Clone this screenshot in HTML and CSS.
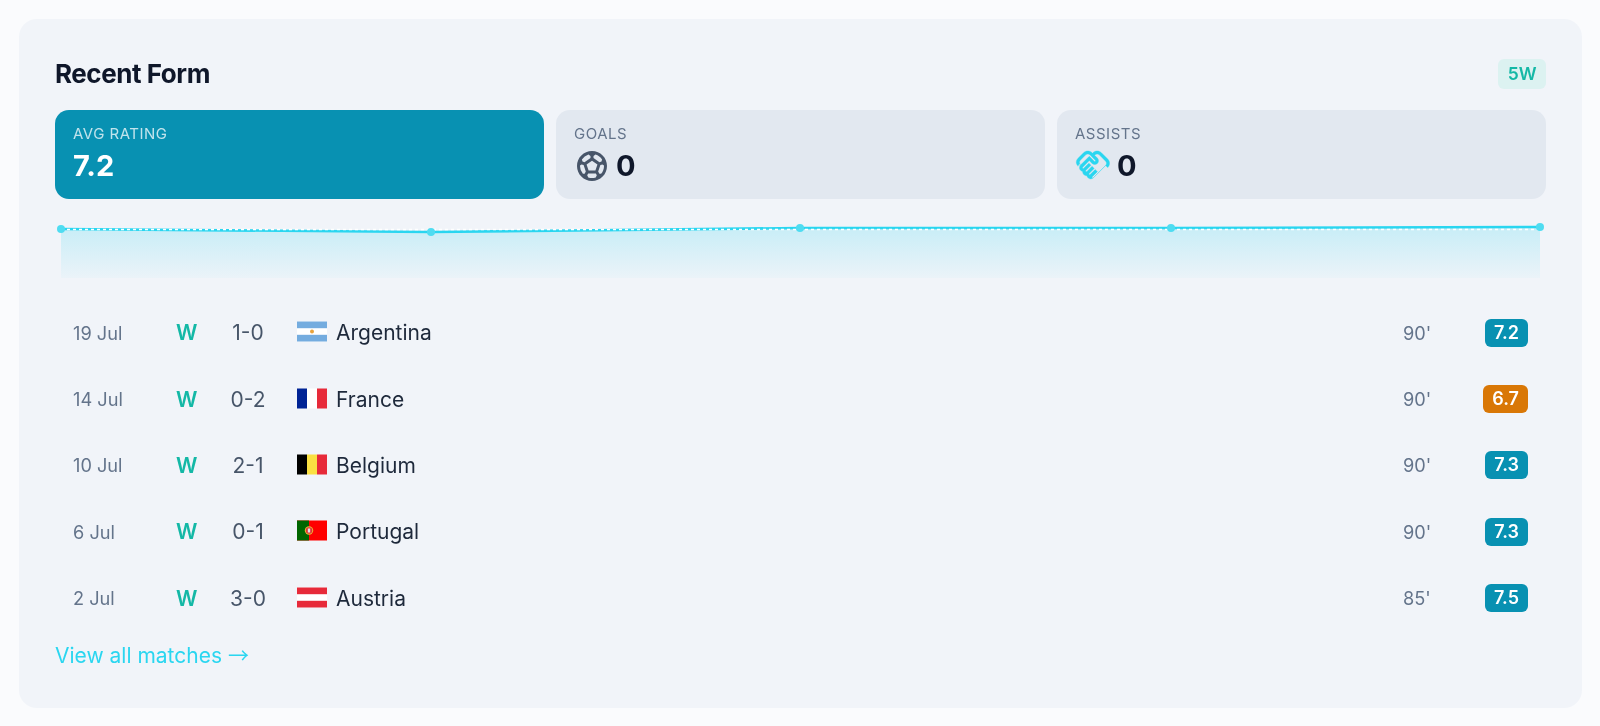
FILE: index.html
```html
<!DOCTYPE html>
<html lang="en">
<head>
<meta charset="utf-8">
<title>Recent Form</title>
<link rel="stylesheet" href="styles.css">
</head>
<body>
<section class="card">
  <header class="head">
    <h2 class="title">Recent Form</h2>
    <span class="streak">5W</span>
  </header>
  <div class="stats">
    <div class="stat stat-primary">
      <div class="stat-label">AVG RATING</div>
      <div class="stat-value">7.2</div>
    </div>
    <div class="stat">
      <div class="stat-label">GOALS</div>
      <div class="stat-value">
        <svg class="ico ico-ball" viewBox="0 0 24 24" fill="currentColor"><path d="M12 2C6.48 2 2 6.48 2 12s4.48 10 10 10 10-4.48 10-10S17.52 2 12 2zm1 3.3 1.35-.95c1.82.56 3.37 1.76 4.38 3.34l-.39 1.34-1.35.46L13 6.7V5.3zm-3.35-.95L11 5.3v1.4L7.01 9.49l-1.35-.46-.39-1.34a8.103 8.103 0 0 1 4.38-3.34zM7.08 17.11l-1.14.1A7.938 7.938 0 0 1 4 12c0-.12.01-.23.02-.35l1-.73 1.38.48 1.46 4.34-.78 1.37zm7.42 2.48c-.79.26-1.63.41-2.5.41s-1.71-.15-2.5-.41l-.69-1.49.64-1.1h5.11l.64 1.11-.7 1.48zM14.27 15H9.73l-1.35-4.02L12 8.44l3.63 2.54L14.27 15zm3.79 2.21-1.14-.1-.79-1.37 1.46-4.34 1.39-.47 1 .73c.01.11.02.22.02.34 0 1.99-.73 3.81-1.94 5.21z"/></svg>
        <span>0</span>
      </div>
    </div>
    <div class="stat">
      <div class="stat-label">ASSISTS</div>
      <div class="stat-value">
        <svg class="ico ico-hands" viewBox="0 0 24 24" fill="currentColor" stroke="currentColor" stroke-width="0.25"><path d="M12.22 19.85c-.18.18-.5.21-.71 0a.504.504 0 0 1 0-.71l3.39-3.39-1.41-1.41-3.39 3.39c-.19.2-.51.19-.71 0a.513.513 0 0 1 0-.71l3.39-3.39-1.41-1.41-3.39 3.39c-.18.18-.5.21-.71 0a.513.513 0 0 1 0-.71l3.39-3.39-1.42-1.41-3.39 3.39c-.18.18-.5.21-.71 0a.513.513 0 0 1 0-.71L9.52 8.4l1.87 1.86c.95.95 2.59.94 3.54 0 .98-.98.98-2.56 0-3.54l-1.86-1.86.28-.28c.78-.78 2.05-.78 2.83 0l4.24 4.24c.78.78.78 2.05 0 2.83l-8.2 8.2zm9.61-6.78c1.56-1.56 1.56-4.09 0-5.66l-4.24-4.24c-1.56-1.56-4.09-1.56-5.66 0l-.28.28-.28-.28c-1.56-1.56-4.09-1.56-5.66 0L2.17 6.71a3.995 3.995 0 0 0-.4 5.19l1.45-1.45a2 2 0 0 1 .37-2.33l3.54-3.54c.78-.78 2.05-.78 2.83 0l3.56 3.56c.18.18.21.5 0 .71-.21.21-.53.18-.71 0L9.52 5.57l-5.8 5.79c-.98.97-.98 2.56 0 3.54.39.39.89.64 1.42.71a2.458 2.458 0 0 0 .71 2.12 2.458 2.458 0 0 0 2.12.71c.07.54.31 1.03.71 1.42.47.47 1.1.73 1.77.73.67 0 1.3-.26 1.77-.73l8.21-8.21z"/><path d="M1.9 12l2.4-1.2" fill="none"/></svg>
        <span>0</span>
      </div>
    </div>
  </div>
  <svg class="spark" viewBox="0 0 1491 62" preserveAspectRatio="none">
    <defs>
      <linearGradient id="fade" x1="0" y1="0" x2="0" y2="1">
        <stop offset="0" stop-color="#22d3ee" stop-opacity="0.2"/>
        <stop offset="1" stop-color="#22d3ee" stop-opacity="0.03"/>
      </linearGradient>
    </defs>
    <path class="spark-fill" d="M6 8L376 11L745 7L1116 7L1485 6V57H6Z"/>
    <path class="spark-line" d="M6 8L376 11L745 7L1116 7L1485 6"/>
    <path class="spark-avg" d="M6 8.5H1485"/>
    <circle class="spark-dot" cx="6" cy="8" r="4"/>
    <circle class="spark-dot" cx="376" cy="11" r="4"/>
    <circle class="spark-dot" cx="745" cy="7" r="4"/>
    <circle class="spark-dot" cx="1116" cy="7" r="4"/>
    <circle class="spark-dot" cx="1485" cy="6" r="4"/>
  </svg>
  <ul class="matches">
    <li class="match"><span class="date">19 Jul</span><span class="res">W</span><span class="score">1-0</span>
      <svg class="flag" viewBox="0 0 30 20"><rect width="30" height="20" fill="#fff"/><rect width="30" height="6.7" fill="#74acdf"/><rect y="13.3" width="30" height="6.7" fill="#74acdf"/><circle cx="15" cy="10" r="2" fill="#e8a33d"/></svg>
      <span class="team">Argentina</span><span class="mins">90'</span><span class="slot"><span class="rating">7.2</span></span></li>
    <li class="match"><span class="date">14 Jul</span><span class="res">W</span><span class="score">0-2</span>
      <svg class="flag" viewBox="0 0 30 20"><rect width="10" height="20" fill="#002395"/><rect x="10" width="10" height="20" fill="#fff"/><rect x="20" width="10" height="20" fill="#e72a3a"/></svg>
      <span class="team">France</span><span class="mins">90'</span><span class="slot"><span class="rating rating-low">6.7</span></span></li>
    <li class="match"><span class="date">10 Jul</span><span class="res">W</span><span class="score">2-1</span>
      <svg class="flag" viewBox="0 0 30 20"><rect width="10" height="20" fill="#000"/><rect x="10" width="10" height="20" fill="#fae042"/><rect x="20" width="10" height="20" fill="#e72a3a"/></svg>
      <span class="team">Belgium</span><span class="mins">90'</span><span class="slot"><span class="rating">7.3</span></span></li>
    <li class="match"><span class="date">6 Jul</span><span class="res">W</span><span class="score">0-1</span>
      <svg class="flag" viewBox="0 0 30 20"><rect width="30" height="20" fill="#f00"/><rect width="12" height="20" fill="#060"/><circle cx="12" cy="10" r="4.2" fill="#e8b93a"/><circle cx="12" cy="10" r="3.2" fill="#d33"/><rect x="10.8" y="8" width="2.4" height="4" fill="#dfe6ee"/></svg>
      <span class="team">Portugal</span><span class="mins">90'</span><span class="slot"><span class="rating">7.3</span></span></li>
    <li class="match"><span class="date">2 Jul</span><span class="res">W</span><span class="score">3-0</span>
      <svg class="flag" viewBox="0 0 30 20"><rect width="30" height="20" fill="#fff"/><rect width="30" height="6.7" fill="#e72a3a"/><rect y="13.3" width="30" height="6.7" fill="#e72a3a"/></svg>
      <span class="team">Austria</span><span class="mins">85'</span><span class="slot"><span class="rating">7.5</span></span></li>
  </ul>
  <a class="all" href="#">View all matches <span class="arrow">→</span></a>
</section>
</body>
</html>
```
FILE: styles.css
```css
* { box-sizing: border-box; }
html, body { height: 100%; }
body {
  margin: 0;
  padding: 19px 18px 18px 19px;
  background: #fafbfd;
  font-family: Inter, "Liberation Sans", sans-serif;
  color: #0f172a;
}
.card {
  height: 689px;
  padding: 36px 36px 0;
  background: #f1f4f9;
  border-radius: 18px;
  filter: blur(0.45px);
}
.head {
  display: flex;
  justify-content: space-between;
  align-items: center;
  height: 31px;
  margin-top: 3px;
}
.title { margin: 0; font-size: 26px; font-weight: 700; letter-spacing: -0.45px; }
.streak {
  padding: 4px 9.5px;
  border-radius: 6px;
  background: #dcf2f1;
  color: #14b8a6;
  font-size: 17.5px;
  font-weight: 600;
  line-height: 22px;
}
.stats {
  display: grid;
  grid-template-columns: repeat(3, 1fr);
  gap: 12px;
  margin-top: 21px;
}
.stat {
  height: 89px;
  padding: 15px 18px;
  border-radius: 14px;
  background: #e2e8f0;
}
.stat-primary { background: #0891b2; color: #fff; }
.stat-label { font-size: 15px; line-height: 17px; color: #64748b; letter-spacing: 0.5px; }
.stat-primary .stat-label { color: rgba(255, 255, 255, 0.75); }
.stat-value {
  display: flex;
  align-items: center;
  gap: 6px;
  margin-top: 6px;
  font-size: 29px;
  font-weight: 700;
  line-height: 36px;
}
.ico { width: 36px; height: 36px; flex: none; }
.ico-ball { color: #475569; }
.ico-hands { color: #2ad6f0; }
.spark { display: block; width: 1491px; height: 62px; margin-top: 22px; }
.spark-fill { fill: url(#fade); }
.spark-line { fill: none; stroke: #2ad6f0; stroke-width: 2.6; }
.spark-avg { fill: none; stroke: #fff; stroke-width: 1.5; stroke-dasharray: 3 3; }
.spark-dot { fill: #4fdcf1; }
.matches { list-style: none; margin: 16.5px 0 0; padding: 0; }
.match {
  display: flex;
  align-items: center;
  height: 66.4px;
  padding: 0 18px;
  font-size: 21px;
}
.date { width: 103px; font-size: 18.2px; color: #64748b; }
.res { width: 37px; font-size: 21px; font-weight: 600; color: #14b8a6; }
.score { width: 70px; text-align: center; color: #475569; }
.flag { width: 30px; height: 21px; margin-left: 13.5px; margin-top: -2px; flex: none; }
.team { flex: 1; margin-left: 9.5px; color: #1e293b; }
.mins { width: 30px; font-size: 18.2px; color: #64748b; }
.slot { width: 95px; display: flex; justify-content: flex-end; }
.rating {
  padding: 0 9px;
  height: 28px;
  line-height: 28px;
  border-radius: 6px;
  background: #0891b2;
  color: #fff;
  font-size: 18px;
  font-weight: 600;
}
.rating-low { background: #d97706; }
.all {
  display: block;
  margin-top: 7.5px;
  font-size: 21px;
  line-height: 30px;
  color: #2ad6f0;
  text-decoration: none;
}
.arrow { font-family: "Noto Sans CJK JP", "Liberation Sans", sans-serif; }
```
